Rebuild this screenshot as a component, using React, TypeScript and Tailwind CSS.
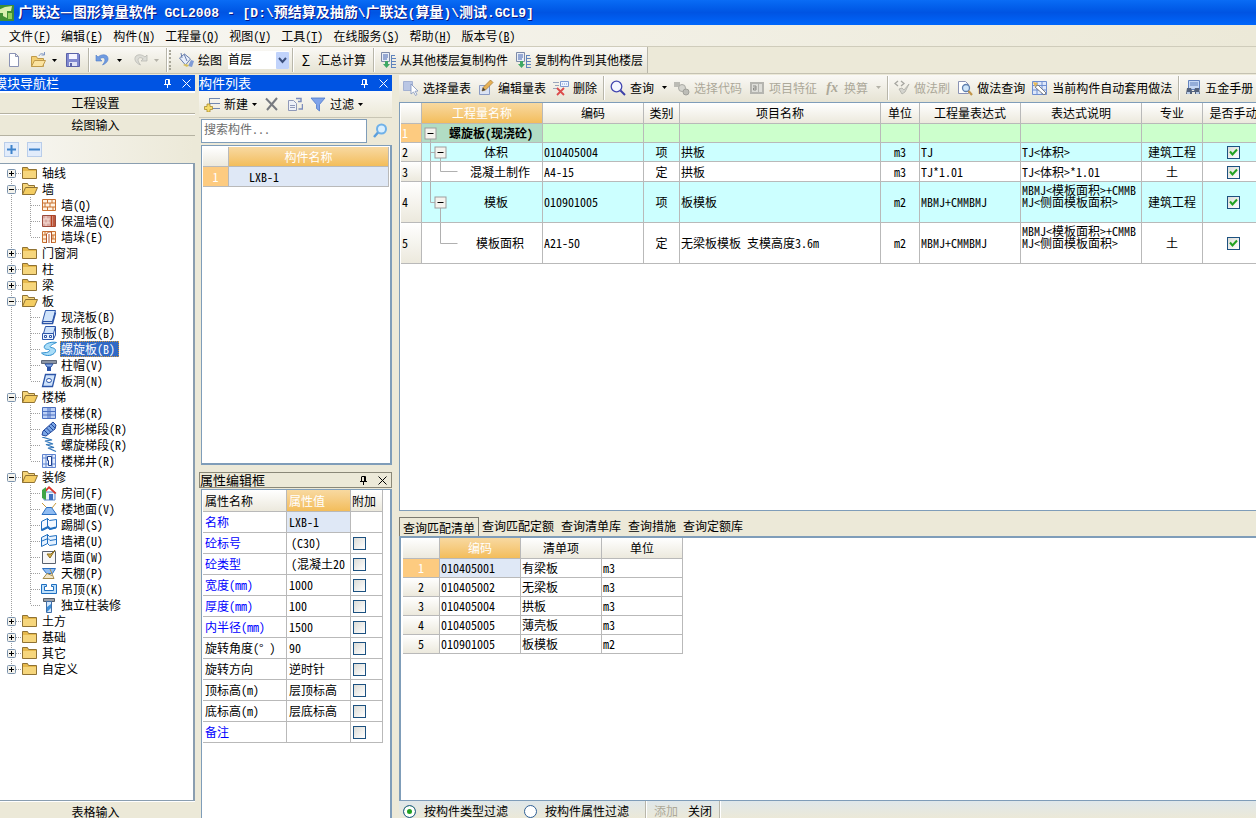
import type { ReactNode } from 'react'
import clsx from 'clsx'

const icons: Record<string, ReactNode> = {
  doc: <path d="M3.5 1.5h6l3 3v10h-9z M9.5 1.5v3h3" fill="#fff" stroke="#8b93b5" />,
  open: (
    <>
      <path d="M1.5 14.5v-10h5l1 2h6v8z" fill="#f3cf72" stroke="#c09a4a" />
      <path d="M1.5 14.5l3-6h11l-3 6z" fill="#fbe3a0" stroke="#c09a4a" />
      <path d="M9 4c1-2.500 3-3 5-1.500M14.500 0v3h-3" fill="none" stroke="#7f97c4" />
    </>
  ),
  save: (
    <>
      <path d="M1.500 1.500h12l1 1v12h-13z" fill="#8088cf" stroke="#5a62a8" />
      <path d="M4 2h8v5H4z" fill="#f4f4ff" />
      <path d="M4 10h8v4H4z" fill="#dfe2f5" />
      <path d="M5 11h2v3H5z" fill="#5a62a8" />
    </>
  ),
  undo: <path d="M1 3v6h6L4.800 6.800C8 4.500 11 6 9.500 10L7.500 13c5-2 7-6 4.500-9C9.500 2 6 2.500 3 5z" fill="#6f9be0" stroke="#4f7cc8" strokeWidth=".6" />,
  redo: <path d="M15 3v6H9l2.200-2.200C8 4.500 5 6 6.500 10l2 3C3.500 11 1.500 7 4 4c2.500-2 6-1.500 9 1z" fill="#dcdcd6" stroke="#b9b9b2" strokeWidth=".8" />,
  paint: (
    <>
      <path d="M1.500 6l5-4 6 5-5 6z" fill="#e8eefa" stroke="#6a7fae" />
      <path d="M4 6l-1-5M6 2l3 7" stroke="#6a7fae" fill="none" />
      <path d="M10 14l3-6 3 1-2 6z" fill="#7f9bd6" />
      <path d="M5 13l4 2 2-2-4-1z" fill="#d8c15d" />
    </>
  ),
  copyFloor: (
    <>
      <path d="M1.500.5h8v9h-8z" fill="#e9eef7" stroke="#7d8aa8" />
      <path d="M3 3h5M3 5h5M3 7h4" stroke="#4464b0" />
      <path d="M5 9v3H3l3.500 4L10 12H8V9z" fill="#3fa864" />
      <path d="M11.500 3v12M11 3.500h4M11 6.500h5M11 9.500h5M11 12.500h5M11 15.500h5" stroke="#5f84bd" />
    </>
  ),
  add: (
    <>
      <path d="M6 2.500h10M6 7.500h10M6 12.500h10M5.500 2v11" stroke="#7188b0" fill="none" />
      <path d="M3 8h3v2.500h2.500v3H6V16H3v-2.500H.5v-3H3z" fill="#f5dc6c" stroke="#a98b2b" strokeWidth=".8" />
    </>
  ),
  del: <path d="M2 2.500L13 14M13 2L3 14" stroke="#777a80" strokeWidth="2" fill="none" />,
  copy: (
    <>
      <path d="M1.500 4.500h5l3 3v7h-8z" fill="#eef1f8" stroke="#8f99b8" />
      <path d="M3 9.500h5M3 11.500h5" stroke="#8f99b8" />
      <path d="M9 2.500h5v3h-3M15.500 8v5h-4" fill="none" stroke="#7c8dbd" strokeWidth="1.500" />
    </>
  ),
  filter: <path d="M1 2h14L9.500 8.500V15L6.500 12.500v-4z" fill="#7ea3ea" stroke="#4d78cc" strokeWidth=".8" />,
  search: (
    <>
      <circle cx="9.500" cy="6" r="4.500" fill="#d9efff" stroke="#6fb1e8" strokeWidth="2" />
      <path d="M6 9.500L2 14" stroke="#5b9fdd" strokeWidth="2.500" />
    </>
  ),
  magnify: (
    <>
      <circle cx="6.500" cy="6.500" r="5.300" fill="#f4f6ff" stroke="#4448b0" strokeWidth="1.300" />
      <path d="M10.500 10.500L15 15" stroke="#3c40a8" strokeWidth="2" />
    </>
  ),
  pick: (
    <>
      <path d="M.5 1.500h9v9h-9z" fill="#b9c6e4" stroke="#a3b1d2" />
      <path d="M8 4v10l2.500-2 2 3.500 1.500-1-2-3.200 3-.3z" fill="#fff" stroke="#7f92bd" strokeWidth=".8" />
    </>
  ),
  edit: (
    <>
      <path d="M1.500 5.500h10v9h-10z" fill="#dbe3f3" stroke="#8a9bc4" />
      <path d="M4 11l1-3.500L12.500 0 15 2.500 7.500 10z" fill="#e6b155" stroke="#a17532" strokeWidth=".7" />
      <path d="M4 11l1-3.500L7.500 10z" fill="#444" />
    </>
  ),
  delRow: (
    <>
      <path d="M0 2.500h6M2 5.500h4M0 8.500h4" stroke="#9aa5bb" />
      <path d="M7.500 1.500h8v5h-8z" fill="#eef4ff" stroke="#7f9bd0" />
      <path d="M9 4h5" stroke="#7f9bd0" strokeDasharray="1 1" />
      <path d="M4 8l7 7M11 8l-7 7" stroke="#dc4b4b" strokeWidth="1.800" />
    </>
  ),
  code: (
    <>
      <path d="M0 2h6v5H0z" fill="#bcbcb6" />
      <circle cx="8" cy="8" r="3.500" fill="#d5d5cf" stroke="#aaaaa4" />
      <circle cx="12" cy="12" r="3" fill="#bdbdb7" stroke="#a0a09a" />
    </>
  ),
  feature: (
    <>
      <path d="M1 2h14v12H1z" fill="#b5b5b0" />
      <path d="M3 4h6v8H3zM10 4h3v8h-3z" fill="#deded9" />
      <path d="M4 6h3v4H4.500V8H7" stroke="#8c8c88" fill="none" />
    </>
  ),
  brush: (
    <>
      <path d="M4 1L1 3.500 4 6M7 1l3 2.500L7 6" fill="none" stroke="#a6a6a0" strokeWidth="1.300" />
      <path d="M5 9l3 5 3-2 4-8-5 6-2-2z" fill="#d4d4ce" stroke="#acaca6" strokeWidth=".8" />
    </>
  ),
  docFind: (
    <>
      <path d="M1.500 1.500h7l3 3v9h-10z" fill="#fff" stroke="#8b93b5" />
      <circle cx="9" cy="8" r="3.500" fill="#cfe6fa" stroke="#5f7fae" strokeWidth="1.300" />
      <path d="M11.500 11l3.500 4" stroke="#c2954a" strokeWidth="2.200" />
    </>
  ),
  auto: (
    <>
      <path d="M.5 1.500h14v13H.5zM1 5.500h13M1 10h13M5 2v12M10 2v12" fill="#dfe8fa" stroke="#6f8fd0" />
      <path d="M3 7l3-2 8 8-2 2z" fill="#fff" stroke="#666" strokeWidth=".8" />
      <path d="M1 2l5 1-3 4z" fill="#e8ba58" />
    </>
  ),
  handbook: (
    <>
      <path d="M3.500.5h11v9h-11z" fill="#c6d8f5" stroke="#6382bd" />
      <path d="M5 3h8M5 5h8" stroke="#6382bd" />
      <path d="M2 8h4l1 3h2l1-3h4l1 6h-5v-2H7v2H1z" fill="#54627c" />
      <path d="M2 12h3v2H2zM11 12h3v2h-3z" fill="#b8cbe6" />
    </>
  ),
  folder: (
    <>
      <path d="M.5 13.500v-11h5l1 2h8v9z" fill="#e6b94c" stroke="#8f7234" />
      <path d="M1 6h13v7H1z" fill="#f6d67c" />
    </>
  ),
  folderOpen: (
    <>
      <path d="M.5 13.500v-11h5l1 2h6v3" fill="#f6d67c" stroke="#8f7234" />
      <path d="M.5 13.500l3-7h12l-3 7z" fill="#f4cd62" stroke="#8f7234" />
    </>
  ),
  brick: <path d="M1.500 2.500h13v11h-13zM2 6h12M2 10h12M6.500 3v3M11 3v3M4 6v4M9 6v4M6.500 10v3M12 10v3" fill="#fff4e4" stroke="#c9702f" />,
  brickWarm: (
    <>
      <path d="M1.500 2.500h13v11h-13z" fill="#d9a8a0" stroke="#9a4a3c" />
      <path d="M2 6h7M2 10h7M5 3v3M3 6v4M7 6v4M5 10v3" stroke="#f5dcd4" />
      <path d="M10.500 2v12M13 2v12" stroke="#b5401e" strokeWidth="1.500" />
    </>
  ),
  brickPier: (
    <>
      <path d="M1.500 2.500h13v11h-13zM2 6h12M2 10h12M4 3v3M12 6v4" fill="#fff1dc" stroke="#c9702f" />
      <path d="M5.500 14V5l2-2h3v11M8 5v9" fill="#fff" stroke="#b5562a" />
    </>
  ),
  slab: (
    <>
      <path d="M4.500 1.500h10l-3 11h-10z" fill="#cfe3fb" stroke="#2c55a8" />
      <path d="M1.500 12.500v2h10l3-11" fill="none" stroke="#2c55a8" strokeWidth="1.500" />
    </>
  ),
  precast: (
    <>
      <path d="M4.500 1.500h10l-2 7h-10z" fill="#cfe3fb" stroke="#2c55a8" />
      <path d="M1.500 8.500h11v6h-11zM14.500 2v8l-2 4" fill="#e9f2ff" stroke="#2c55a8" />
      <path d="M3.500 10.500h2v2h-2zM8.500 10.500h2v2h-2z" fill="#fff" stroke="#2c55a8" />
    </>
  ),
  spiral: (
    <path
      d="M15.500 1.500C11 .5 5 2 3.500 5c-1 2.500 1 3.500 4 3.500 2 .5 1 2.500-2 3l-5 .5c3 3 9 3.500 12.500.5 3-3 1.500-5.500-3-6-2-.5-.5-2.500 5.500-5z"
      fill="#a9ddf8"
      stroke="#2f8fcf"
    />
  ),
  cap: (
    <>
      <path d="M.5 3.500h15v3H.5z" fill="#8b95a5" stroke="#5f6878" />
      <path d="M4 7h8l-2 3H6z" fill="#8fb3ea" stroke="#2c55a8" />
      <path d="M6 10h4v4H6z" fill="#2c55a8" />
    </>
  ),
  hole: (
    <>
      <path d="M4.500 1.500h10l-3 12h-10z" fill="#cfe3fb" stroke="#2c55a8" strokeWidth="1.300" />
      <ellipse cx="8" cy="7.500" rx="2.500" ry="2" fill="#fff" stroke="#2c55a8" />
    </>
  ),
  stair: <path d="M1.500 2.500h13v11h-13zM2 6.500h12M2 10h12M7 3v10M9 3v10" fill="#bcd0f5" stroke="#4a6fc0" />,
  stairRun: (
    <>
      <path d="M1 14l1-4 10-9 3 3-1 4-9 7z" fill="#7aa6e6" stroke="#23479a" />
      <path d="M3 9l4 4M5.500 7l4 4M8 5l4 4M10 3l4 4" stroke="#23479a" />
    </>
  ),
  stairSpiral: <path d="M1 0l10 3-7 1 8 3-7 .5 8 3-6 .5 8 3.500" fill="none" stroke="#2f74b8" strokeWidth="1.200" />,
  well: (
    <>
      <path d="M1.500 1.500h13v13h-13zM2 5h12M2 11h12M5 2v12M11 2v12" fill="#e4edfc" stroke="#5f84d0" />
      <path d="M6.500 3.500h4v9h-3v-5h-1z" fill="#fff" stroke="#1e418f" />
    </>
  ),
  house: (
    <>
      <path d="M3 7h11v8H3z" fill="#e9f1fb" stroke="#5b86c9" />
      <path d="M1 8l7-7 7.500 7-1.500 1-6-5.500L3 9z" fill="#d9372c" />
      <path d="M8 9h4v6H8z" fill="#3d70c0" />
      <path d="M1 5l4-3v13l-4-2z" fill="#3fa546" />
    </>
  ),
  floor: (
    <>
      <path d="M1 2l5 5h5l4-5" fill="none" stroke="#c79a3c" />
      <path d="M5.500 6.500h5l5 7H1z" fill="#8fbcf2" stroke="#2c6fc0" />
    </>
  ),
  skirting: (
    <>
      <path d="M.5 4.500l6-3v9l-6 3zM6.500 1.500l2 2 7-1v8l-7 2-2-2z" fill="#f2f8ff" stroke="#1f6fc0" />
      <path d="M1 13l6-3 2 2 6-1.500" fill="none" stroke="#1f6fc0" strokeWidth="2" />
    </>
  ),
  dado: (
    <>
      <path d="M.5 4.500l6-3v9l-6 3zM6.500 1.500l2 2 7-1v9l-7 1-2-2z" fill="#e4f1ff" stroke="#1f6fc0" />
      <path d="M1 8l6-2.500 2 2 6-1" fill="none" stroke="#1f6fc0" />
    </>
  ),
  wallFace: (
    <>
      <path d="M1.500 2.500h13v12h-13z" fill="#f7f7f7" stroke="#59616e" />
      <path d="M6 5l3 4 5-8-4 4z" fill="#d8b24a" stroke="#8c6e22" />
    </>
  ),
  ceiling: (
    <>
      <path d="M1.500 3.500h13l-3 5h-6z" fill="#8fbcf2" stroke="#2c6fc0" />
      <path d="M9 4l4 9.500H2l4-5 5 2" fill="#f4e7c8" stroke="#a48a4a" />
    </>
  ),
  hang: <path d="M.5 3.500h5v2h-2v4h9v-4h-2v-2h5v9H.5z" fill="#bfe0fa" stroke="#1f6fc0" />,
  column: (
    <>
      <path d="M2.500 1.500h11v3h-11z" fill="#9aa0a8" stroke="#555c66" />
      <path d="M5.500 4.500h5v11h-5z" fill="#d5e8fb" stroke="#3f6ea8" />
      <path d="M6 10l4-3v4l-4 4z" fill="#3f8fd8" />
    </>
  ),
  logo: (
    <>
      <path d="M0 0h16v16H0z" fill="#3f8f35" />
      <path d="M0 5l7-3 7-1-1 5H9v7l-4-2V8H0z" fill="#d7efae" />
      <path d="M10 8h4v6h-4z" fill="#8fcf5e" />
    </>
  ),
}

function Icon({ name, className }: { name: string; className?: string }) {
  return (
    <svg viewBox="0 0 16 16" className={clsx('size-4 shrink-0', className)} aria-hidden="true">
      {icons[name]}
    </svg>
  )
}

function Arrow({ dim }: { dim?: boolean }) {
  return (
    <svg viewBox="0 0 5 3" className={clsx('w-[5px] h-[3px] shrink-0', dim ? 'fill-[#b4b2a8]' : 'fill-black')} aria-hidden="true">
      <path d="M0 0h5L2.500 3z" />
    </svg>
  )
}

function Sep({ className }: { className?: string }) {
  return <span className={clsx('w-px h-6 shrink-0 bg-[#b8b6aa] shadow-[1px_0_0_white]', className)} />
}

function ToolButton({ icon, label, arrow, disabled }: { icon: string; label: string; arrow?: boolean; disabled?: boolean }) {
  return (
    <button disabled={disabled} className="flex items-center gap-1 shrink-0 whitespace-nowrap disabled:text-[#aca899]">
      {icon === 'fx' ? <i className="w-4 font-bold text-sm font-['Liberation_Serif',serif]">fx</i> : <Icon name={icon} />}
      {label}
      {arrow && <span className="pl-1"><Arrow dim={disabled} /></span>}
    </button>
  )
}

function PanelTitle({ title, active, className }: { title: string; active?: boolean; className?: string }) {
  return (
    <div
      className={clsx(
        'h-4 shrink-0 flex items-center justify-between pr-1',
        active ? 'bg-[#0054e3] text-white' : 'bg-[#ece9d8] border border-[#8a8878]',
      )}
    >
      <h2 className={clsx('text-[13px] leading-4 whitespace-nowrap', className)}>{title}</h2>
      <div className="flex gap-2.5">
        <button aria-label="固定">
          <svg viewBox="0 0 9 9" className="size-[9px]" fill="none" stroke="currentColor">
            <path d="M2.500 0.500h4v5M1 5.500h7M4.500 6v3M2.500 1v4M5.500 1v4" />
          </svg>
        </button>
        <button aria-label="关闭">
          <svg viewBox="0 0 9 9" className="size-[9px]" fill="none" stroke="currentColor">
            <path d="M.5.5l8 8M8.500.5l-8 8" />
          </svg>
        </button>
      </div>
    </div>
  )
}

function Check({ label, checked }: { label: string; checked?: boolean }) {
  return (
    <label className="inline-grid place-items-center align-middle">
      <input
        type="checkbox"
        aria-label={label}
        defaultChecked={checked}
        className="peer appearance-none col-start-1 row-start-1 size-[13px] border border-[#1c5180] bg-linear-to-br from-[#dcdcd7] to-white"
      />
      <svg viewBox="0 0 9 9" className="col-start-1 row-start-1 size-[9px] invisible peer-checked:visible pointer-events-none" aria-hidden="true">
        <path d="M1 3.500l2.500 3L8 1.500" fill="none" stroke="#21a121" strokeWidth="2" />
      </svg>
    </label>
  )
}

const title = '广联达—图形算量软件 GCL2008 - [D:\\预结算及抽筋\\广联达(算量)\\测试.GCL9]'

const menus = [
  ['文件', 'F'], ['编辑', 'E'], ['构件', 'N'], ['工程量', 'Q'], ['视图', 'V'],
  ['工具', 'T'], ['在线服务', 'S'], ['帮助', 'H'], ['版本号', 'B'],
]

type Leaf = { name: string; icon: string; selected?: boolean }
const tree: { name: string; children?: Leaf[] }[] = [
  { name: '轴线' },
  {
    name: '墙',
    children: [
      { name: '墙(Q)', icon: 'brick' },
      { name: '保温墙(Q)', icon: 'brickWarm' },
      { name: '墙垛(E)', icon: 'brickPier' },
    ],
  },
  { name: '门窗洞' },
  { name: '柱' },
  { name: '梁' },
  {
    name: '板',
    children: [
      { name: '现浇板(B)', icon: 'slab' },
      { name: '预制板(B)', icon: 'precast' },
      { name: '螺旋板(B)', icon: 'spiral', selected: true },
      { name: '柱帽(V)', icon: 'cap' },
      { name: '板洞(N)', icon: 'hole' },
    ],
  },
  {
    name: '楼梯',
    children: [
      { name: '楼梯(R)', icon: 'stair' },
      { name: '直形梯段(R)', icon: 'stairRun' },
      { name: '螺旋梯段(R)', icon: 'stairSpiral' },
      { name: '楼梯井(R)', icon: 'well' },
    ],
  },
  {
    name: '装修',
    children: [
      { name: '房间(F)', icon: 'house' },
      { name: '楼地面(V)', icon: 'floor' },
      { name: '踢脚(S)', icon: 'skirting' },
      { name: '墙裙(U)', icon: 'dado' },
      { name: '墙面(W)', icon: 'wallFace' },
      { name: '天棚(P)', icon: 'ceiling' },
      { name: '吊顶(K)', icon: 'hang' },
      { name: '独立柱装修', icon: 'column' },
    ],
  },
  { name: '土方' },
  { name: '基础' },
  { name: '其它' },
  { name: '自定义' },
]

const props: { name: string; value: string; blue?: boolean }[] = [
  { name: '名称', value: 'LXB-1', blue: true },
  { name: '砼标号', value: '(C30)', blue: true },
  { name: '砼类型', value: '(混凝土20', blue: true },
  { name: '宽度(mm)', value: '1000', blue: true },
  { name: '厚度(mm)', value: '100', blue: true },
  { name: '内半径(mm)', value: '1500', blue: true },
  { name: '旋转角度(° )', value: '90' },
  { name: '旋转方向', value: '逆时针' },
  { name: '顶标高(m)', value: '层顶标高' },
  { name: '底标高(m)', value: '层底标高' },
  { name: '备注', value: '', blue: true },
]

const quantities = [
  { h: 'h-[19px]', name: '体积', code: '010405004', kind: '项', item: '拱板', unit: 'm3', expr: 'TJ', desc: 'TJ<体积>', major: '建筑工程' },
  { h: 'h-5', name: '混凝土制作', code: 'A4-15', kind: '定', item: '拱板', unit: 'm3', expr: 'TJ*1.01', desc: 'TJ<体积>*1.01', major: '土' },
  { h: 'h-[41px]', name: '模板', code: '010901005', kind: '项', item: '板模板', unit: 'm2', expr: 'MBMJ+CMMBMJ', desc: 'MBMJ<模板面积>+CMMB\nMJ<侧面模板面积>', major: '建筑工程' },
  { h: 'h-[41px]', name: '模板面积', code: 'A21-50', kind: '定', item: '无梁板模板 支模高度3.6m', unit: 'm2', expr: 'MBMJ+CMMBMJ', desc: 'MBMJ<模板面积>+CMMB\nMJ<侧面模板面积>', major: '土' },
]

const matches = [
  ['010405001', '有梁板', 'm3'],
  ['010405002', '无梁板', 'm3'],
  ['010405004', '拱板', 'm3'],
  ['010405005', '薄壳板', 'm3'],
  ['010901005', '板模板', 'm2'],
]

const cell = 'border-r border-b border-[#b9b9b9] p-0 overflow-hidden whitespace-pre'
const head = 'bg-linear-to-b from-white to-[#ece9dd] font-normal'
const headHot = 'bg-linear-to-b from-[#f8d9a0] to-[#f3bd5a] font-normal text-white'
const numHot = 'bg-[#fdcb80] text-white'

function ExpandBox({ x, y }: { x: number; y: number }) {
  return (
    <>
      <rect x={x - 5.5} y={y - 5.5} width="11" height="11" fill="#f4f3ee" stroke="#9d9d9d" />
      <path d={`M${x - 3} ${y}h6`} stroke="#000" />
    </>
  )
}

// connector lines in front of the quantity names
function Guide({ row }: { row: number }) {
  if (row === 0)
    return (
      <svg width="28" height="18" className="shrink-0" fill="none">
        <path d="M8.500 0v18M8 9.500h5M18.500 9v9" stroke="#b0b0b0" />
        <ExpandBox x={18.5} y={9.5} />
      </svg>
    )
  if (row === 1)
    return (
      <svg width="36" height="19" className="shrink-0" fill="none">
        <path d="M8.500 0v19M18.500 0v9.500h17" stroke="#b0b0b0" />
      </svg>
    )
  if (row === 2)
    return (
      <svg width="28" height="40" className="shrink-0" fill="none">
        <path d="M8.500 0v20.500h5M18.500 20v20" stroke="#b0b0b0" />
        <ExpandBox x={18.5} y={20.5} />
      </svg>
    )
  return (
    <svg width="36" height="40" className="shrink-0" fill="none">
      <path d="M18.500 0v20.500h17" stroke="#b0b0b0" />
    </svg>
  )
}

function TreePanel() {
  return (
    <ul className="flex-1 min-h-0 overflow-hidden bg-white border-t border-r-2 border-b border-[#8a9eb0] pt-px">
      {tree.map((group, i) => (
        <li key={group.name}>
          <div className="flex items-center h-4">
            <button className="shrink-0" aria-label={group.children ? '折叠' : '展开'}>
              <svg width="22" height="16" fill="none" className="block">
                <path
                  d={i === 0 ? 'M11.5 8v8' : i === tree.length - 1 ? 'M11.5 0v8' : 'M11.5 0v16'}
                  stroke="#a0a0a0"
                  strokeDasharray="1 1"
                />
                <path d="M16 8.500h6" stroke="#a0a0a0" strokeDasharray="1 1" />
                <rect x="7.500" y="4.500" width="8" height="8" rx="1" fill="#f3f2ec" stroke="#7b93ad" />
                <path d={group.children ? 'M9 8.500h5' : 'M9 8.500h5M11.500 6v5'} stroke="#000" />
              </svg>
            </button>
            <Icon name={group.children ? 'folderOpen' : 'folder'} />
            <span className="pl-1">{group.name}</span>
          </div>
          {group.children && (
            <ul>
              {group.children.map((leaf, j) => (
                <li key={leaf.name} className="flex items-center h-4">
                  <svg width="41" height="16" fill="none" className="block shrink-0" aria-hidden="true">
                    <path
                      d={j === group.children!.length - 1 ? 'M11.5 0v16M30.5 0v8M31 8.500h10' : 'M11.5 0v16M30.5 0v16M31 8.500h10'}
                      stroke="#a0a0a0"
                      strokeDasharray="1 1"
                    />
                  </svg>
                  <Icon name={leaf.icon} />
                  <span
                    className={clsx(
                      'ml-[3px] h-4 pl-px leading-4 whitespace-nowrap',
                      leaf.selected && 'pr-1 bg-[#316ac5] text-white outline-1 -outline-offset-1 outline-dotted outline-[#ce953a]',
                    )}
                  >
                    {leaf.name}
                  </span>
                </li>
              ))}
            </ul>
          )}
        </li>
      ))}
    </ul>
  )
}

function NavPanel() {
  return (
    <aside className="w-[195px] shrink-0 flex flex-col">
      <PanelTitle title="模块导航栏" active className="-indent-[6px]" />
      <button className="h-[23px] shrink-0 pr-1 border-b border-[#b5b2a2] border-t-2 border-t-white bg-[#ece9d8]">工程设置</button>
      <button className="h-[22px] shrink-0 pr-1 border-b border-[#b5b2a2] border-t border-t-white bg-[#ece9d8]">绘图输入</button>
      <div className="h-[27px] shrink-0 flex items-center gap-2 pl-1 bg-linear-to-r from-[#f8f7f3] to-[#ece9d8]">
        {['M3 7.500h9M7.500 3v9', 'M2 7.500h11'].map((d, i) => (
          <button key={d} aria-label={i ? '全部折叠' : '全部展开'}>
            <svg width="15" height="15" className="block">
              <rect x=".5" y=".5" width="14" height="14" fill="#e2ecfb" stroke="#b9cdea" />
              <path d={d} stroke="#3f83cb" strokeWidth="2" />
            </svg>
          </button>
        ))}
      </div>
      <TreePanel />
      <button className="h-[17px] shrink-0 leading-[19px] pr-1 border-t border-white bg-[#ece9d8]">表格输入</button>
    </aside>
  )
}

function ComponentPanel() {
  return (
    <section className="w-[193px] shrink-0 flex flex-col">
      <PanelTitle title="构件列表" active />
      <div className="h-[26px] shrink-0 flex items-center gap-[7px] pl-[5px] bg-linear-to-b from-[#faf9f6] to-[#ece9d8]">
        <button className="flex items-center gap-1">
          <Icon name="add" />
          新建
          <Arrow />
        </button>
        <button aria-label="删除"><Icon name="del" /></button>
        <button aria-label="复制"><Icon name="copy" /></button>
        <button className="flex items-center gap-1">
          <Icon name="filter" />
          过滤
          <Arrow />
        </button>
      </div>
      <div className="h-[26px] shrink-0 flex items-center border-t border-[#c9c6b5] pl-0.5">
        <input
          aria-label="搜索构件"
          placeholder="搜索构件..."
          className="flex-1 min-w-0 h-6 px-0.5 pb-1 bg-white border border-[#7f9db9] placeholder:text-[#6d6d6d]"
        />
        <button aria-label="搜索" className="w-[25px] flex justify-center"><Icon name="search" /></button>
      </div>
      <div className="h-[320px] shrink-0 mt-0.5 ml-0.5 bg-white border border-[#7f9db9] border-r-2 border-b-2 p-px">
        <table className="w-full table-fixed border-separate border-spacing-0">
          <colgroup>
            <col className="w-[26px]" />
            <col />
          </colgroup>
          <thead>
            <tr className="h-5">
              <th className={clsx(cell, head)} aria-label="序号" />
              <th className={clsx(cell, headHot)}>构件名称</th>
            </tr>
          </thead>
          <tbody>
            <tr className="h-5">
              <td className={clsx(cell, numHot, 'text-center')}>1</td>
              <td className={clsx(cell, 'bg-[#dfe8f6] pl-5')}>LXB-1</td>
            </tr>
          </tbody>
        </table>
      </div>
      <div className="h-[7px] shrink-0" />
      <PanelTitle title="属性编辑框" />
      <div className="flex-1 min-h-0 overflow-hidden mt-px ml-0.5 bg-white border-t border-l border-r-2 border-[#7f9db9] pl-px">
        <table className="w-[180px] table-fixed border-separate border-spacing-0">
          <colgroup>
            <col className="w-[84px]" />
            <col className="w-16" />
            <col />
          </colgroup>
          <thead>
            <tr className="h-[22px] text-left">
              <th className={clsx(cell, head, 'pl-0.5')}>属性名称</th>
              <th className={clsx(cell, headHot, 'pl-0.5')}>属性值</th>
              <th className={clsx(cell, head, 'pl-px')}>附加</th>
            </tr>
          </thead>
          <tbody>
            {props.map((p, i) => (
              <tr key={p.name} className="h-[21px]">
                <td className={clsx(cell, 'pl-0.5', p.blue && 'text-[#0000ff]')}>{p.name}</td>
                <td className={clsx(cell, p.value.startsWith('(') ? 'pl-1' : 'pl-0.5', i === 0 && 'bg-[#dfe8f6]')}>{p.value}</td>
                <td className={clsx(cell, 'pl-0.5 leading-none')}>{i > 0 && <Check label={`${p.name} 附加`} />}</td>
              </tr>
            ))}
          </tbody>
        </table>
      </div>
    </section>
  )
}

function QuantityTable() {
  return (
    <div className="flex-1 min-h-0 overflow-hidden bg-white border border-[#7f9db9] border-r-0 pl-px">
      <table className="w-[864px] table-fixed border-separate border-spacing-0">
        <colgroup>
          <col className="w-[21px]" />
          <col className="w-[121px]" />
          <col className="w-[101px]" />
          <col className="w-9" />
          <col className="w-[201px]" />
          <col className="w-[39px]" />
          <col className="w-[101px]" />
          <col className="w-[121px]" />
          <col className="w-[61px]" />
          <col />
        </colgroup>
        <thead>
          <tr className="h-[21px]">
            <th className={clsx(cell, head)} aria-label="序号" />
            <th className={clsx(cell, headHot)}>工程量名称</th>
            {['编码', '类别', '项目名称', '单位', '工程量表达式', '表达式说明', '专业', '是否手动'].map((h) => (
              <th key={h} className={clsx(cell, head)}>{h}</th>
            ))}
          </tr>
        </thead>
        <tbody>
          <tr className="h-[19px] bg-[#ccffcc]">
            <td className={clsx(cell, numHot, 'pl-px')}>1</td>
            <td className={clsx(cell, 'bg-[#b1dcc4] font-bold')}>
              <div className="flex items-center">
                <svg width="18" height="18" className="shrink-0" fill="none">
                  <path d="M8.500 9v9" stroke="#b0b0b0" />
                  <ExpandBox x={8.5} y={9.5} />
                </svg>
                <span className="flex-1 text-center">螺旋板(现浇砼)</span>
              </div>
            </td>
            {[1, 2, 3, 4, 5, 6, 7, 8].map((n) => <td key={n} className={cell} />)}
          </tr>
          {quantities.map((q, i) => (
            <tr key={q.name} className={clsx(q.h, i % 2 === 0 && 'bg-[#ccffff]')}>
              <td className={clsx(cell, head, 'pl-px')}>{i + 2}</td>
              <td className={cell}>
                <div className="flex items-center">
                  <Guide row={i} />
                  <span className="flex-1 text-center">{q.name}</span>
                </div>
              </td>
              <td className={clsx(cell, 'pl-px')}>{q.code}</td>
              <td className={clsx(cell, 'text-center')}>{q.kind}</td>
              <td className={clsx(cell, 'pl-px')}>{q.item}</td>
              <td className={clsx(cell, 'text-center')}>{q.unit}</td>
              <td className={clsx(cell, 'pl-px')}>{q.expr}</td>
              <td className={clsx(cell, 'pl-px', i > 1 && 'align-top leading-3 pt-0.5')}>{q.desc}</td>
              <td className={clsx(cell, 'text-center')}>{q.major}</td>
              <td className={clsx(cell, 'text-center leading-none')}><Check label={`${q.name} 是否手动`} checked /></td>
            </tr>
          ))}
        </tbody>
      </table>
    </div>
  )
}

function MatchPanel() {
  return (
    <section className="h-[301px] shrink-0 flex flex-col">
      <div role="tablist" className="h-[19px] shrink-0 flex">
        {['查询匹配清单', '查询匹配定额', '查询清单库', '查询措施', '查询定额库'].map((t, i) => (
          <button
            key={t}
            role="tab"
            aria-selected={i === 0}
            className={clsx(
              'whitespace-nowrap leading-4',
              i === 0 ? 'px-[3px] mr-[3px] border border-b-0 border-[#7b7a70] pt-0.5' : 'mr-[7px] pb-0.5',
            )}
          >
            {t}
          </button>
        ))}
      </div>
      <div className="flex-1 min-h-0 overflow-hidden bg-white border-t-2 border-l-2 border-b border-[#7f9db9] pl-0.5">
        <table className="w-[280px] table-fixed border-separate border-spacing-0">
          <colgroup>
            <col className="w-[37px]" />
            <col />
            <col />
            <col />
          </colgroup>
          <thead>
            <tr className="h-[21px]">
              <th className={clsx(cell, head)} aria-label="序号" />
              <th className={clsx(cell, headHot)}>编码</th>
              <th className={clsx(cell, head)}>清单项</th>
              <th className={clsx(cell, head)}>单位</th>
            </tr>
          </thead>
          <tbody>
            {matches.map((m, i) => (
              <tr key={m[0]} className="h-[19px]">
                <td className={clsx(cell, 'text-center', i === 0 ? numHot : head)}>{i + 1}</td>
                <td className={clsx(cell, 'pl-px', i === 0 && 'bg-[#dfe8f6]')}>{m[0]}</td>
                <td className={clsx(cell, 'pl-px')}>{m[1]}</td>
                <td className={clsx(cell, 'pl-px')}>{m[2]}</td>
              </tr>
            ))}
          </tbody>
        </table>
      </div>
      <div className="h-[17px] shrink-0 flex items-start leading-5 bg-linear-to-b from-[#dfe7ea] to-[#ece9d8]">
        {['按构件类型过滤', '按构件属性过滤'].map((t, i) => (
          <label key={t} className="flex items-center gap-2 pl-1 pr-3">
            <input
              type="radio"
              name="filter"
              defaultChecked={i === 0}
              className="appearance-none size-[13px] rounded-full border border-[#2f5f96] bg-white checked:bg-[#21a121] checked:shadow-[inset_0_0_0_3px_white]"
            />
            {t}
          </label>
        ))}
        <Sep className="ml-1" />
        <button disabled className="px-2 text-[#aca899]">添加</button>
        <button className="pl-0.5 pr-[7px]">关闭</button>
        <Sep />
      </div>
    </section>
  )
}

export default function App() {
  return (
    <div className="h-screen flex flex-col overflow-hidden bg-[#ece9d8] text-black text-xs leading-4 font-['Noto_Sans_Mono_CJK_SC','Noto_Sans_CJK_SC',sans-serif]">
      <header className="h-[25px] shrink-0 flex items-center gap-1 bg-linear-to-b from-[#0a6cf5] via-[#0054e3] to-[#0066fb] text-white">
        <Icon name="logo" className="-ml-0.5" />
        <h1 className="text-sm leading-5 font-bold whitespace-pre text-shadow-[1px_1px_0_#0a1883]">
          {title.split(/([\x20-\x7e]+)/).map((part, i) =>
            i % 2 ? <span key={i} className="text-[13px] font-['Liberation_Mono',monospace]">{part}</span> : part,
          )}
        </h1>
      </header>
      <nav className="h-[22px] shrink-0 flex items-center gap-2.5 pl-[9px] bg-linear-to-r from-[#f8f7f3] to-[#ece9d8] border-b border-[#cfccbb]">
        {menus.map(([name, key]) => (
          <button key={name} className="whitespace-nowrap">
            {name}(<u>{key}</u>)
          </button>
        ))}
      </nav>
      <div className="h-[26px] shrink-0 flex">
        <div className="flex items-center pl-1.5 bg-linear-to-b from-[#faf9f6] to-[#e6e3d3] border-r border-[#b8b6aa]">
          <button aria-label="新建"><Icon name="doc" /></button>
          <button aria-label="打开" className="ml-2 flex items-center gap-1.5"><Icon name="open" /><Arrow /></button>
          <button aria-label="保存" className="ml-2"><Icon name="save" /></button>
          <Sep className="ml-[7px] mr-1.5" />
          <button aria-label="撤销" className="flex items-center gap-1.5"><Icon name="undo" /><Arrow /></button>
          <button aria-label="恢复" disabled className="ml-2.5 flex items-center gap-1.5"><Icon name="redo" /><Arrow dim /></button>
          <span className="mx-[7px] flex gap-0.5">
            <Sep />
            <span className="h-5 my-0.5 border-l-2 border-dotted border-[#a8a698]" />
          </span>
          <ToolButton icon="paint" label="绘图" />
          <div className="ml-1.5 mr-[3px] w-[61px] h-[18px] bg-white grid items-center">
            <select aria-label="楼层" className="appearance-none col-start-1 row-start-1 w-full h-[18px] pb-0.5">
              <option>首层</option>
            </select>
            <svg viewBox="0 0 13 17" className="col-start-1 row-start-1 justify-self-end w-[13px] h-[17px] pointer-events-none" aria-hidden="true">
              <rect width="13" height="17" rx="1" fill="#c1d3fb" />
              <path d="M3 6l3.500 4L10 6" fill="none" stroke="#3b4f7c" strokeWidth="2" />
            </svg>
          </div>
          <Sep />
          <button className="px-[7px] flex items-center gap-1.5 whitespace-nowrap"><span className="w-3 text-sm">Σ</span>汇总计算</button>
          <Sep />
          <div className="pl-1.5 pr-1 flex gap-[7px]">
            <ToolButton icon="copyFloor" label="从其他楼层复制构件" />
            <ToolButton icon="copyFloor" label="复制构件到其他楼层" />
          </div>
        </div>
      </div>
      <main className="flex-1 min-h-0 flex pt-px border-t border-[#c5c2b2]">
        <NavPanel />
        <div className="w-1 shrink-0" />
        <ComponentPanel />
        <div className="w-[7px] shrink-0" />
        <div className="flex-1 min-w-0 flex flex-col">
          <div className="h-[27px] shrink-0 flex items-center gap-[7px] pl-1 pb-0.5 overflow-hidden bg-linear-to-b from-[#faf9f6] to-[#e6e3d3]">
            <ToolButton icon="pick" label="选择量表" />
            <ToolButton icon="edit" label="编辑量表" />
            <ToolButton icon="delRow" label="删除" />
            <Sep className="-mx-px" />
            <ToolButton icon="magnify" label="查询" arrow />
            <ToolButton icon="code" label="选择代码" disabled />
            <ToolButton icon="feature" label="项目特征" disabled />
            <ToolButton icon="fx" label="换算" arrow disabled />
            <Sep className="-mx-px" />
            <ToolButton icon="brush" label="做法刷" disabled />
            <ToolButton icon="docFind" label="做法查询" />
            <ToolButton icon="auto" label="当前构件自动套用做法" />
            <Sep className="-mx-px" />
            <ToolButton icon="handbook" label="五金手册" />
          </div>
          <QuantityTable />
          <div className="h-1.5 shrink-0" />
          <MatchPanel />
        </div>
      </main>
    </div>
  )
}
